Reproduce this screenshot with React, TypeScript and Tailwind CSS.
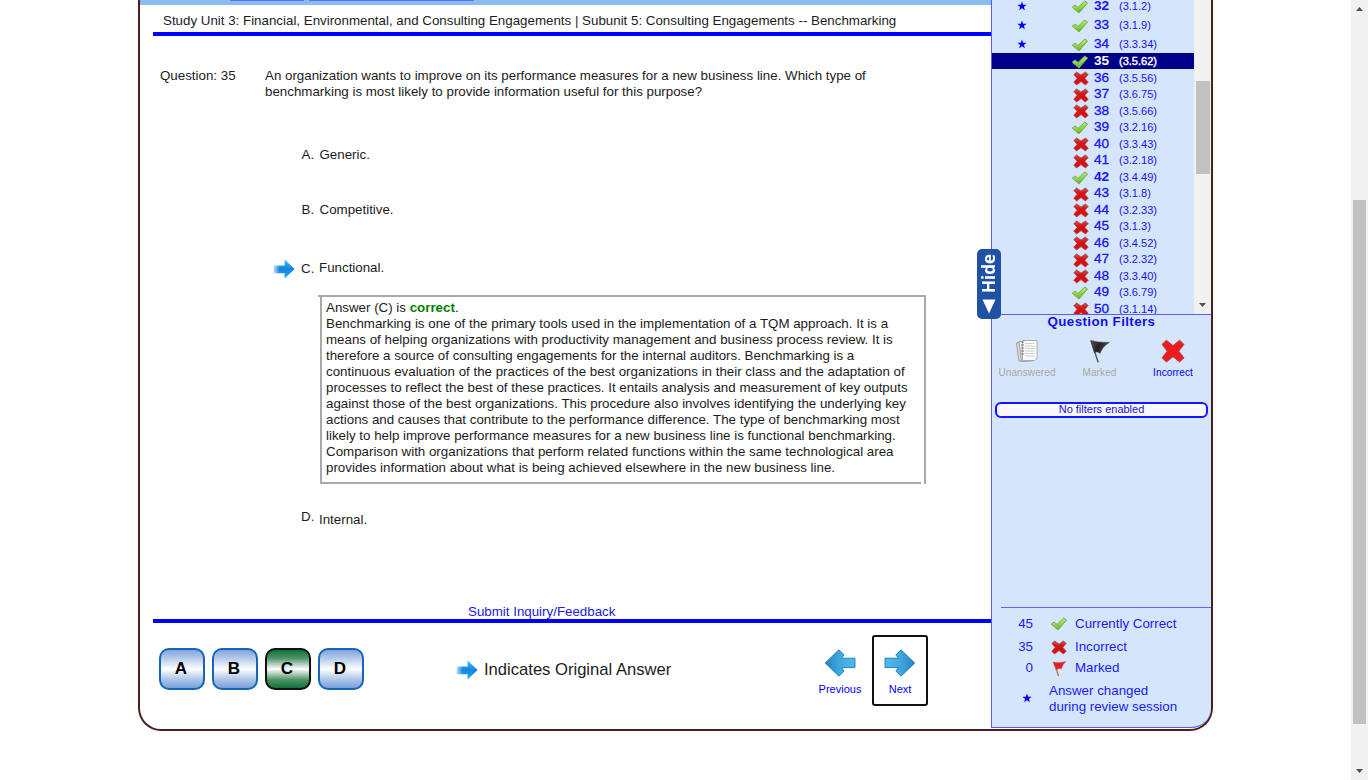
import React from "react";

type Status = "ok" | "bad";

const items: { n: number; ref: string; s: Status; star?: boolean; bold?: boolean }[] = [
  { n: 32, ref: "3.1.2", s: "ok", star: true, bold: true },
  { n: 33, ref: "3.1.9", s: "ok", star: true },
  { n: 34, ref: "3.3.34", s: "ok", star: true },
  { n: 35, ref: "3.5.62", s: "ok" },
  { n: 36, ref: "3.5.56", s: "bad" },
  { n: 37, ref: "3.6.75", s: "bad" },
  { n: 38, ref: "3.5.66", s: "bad" },
  { n: 39, ref: "3.2.16", s: "ok" },
  { n: 40, ref: "3.3.43", s: "bad" },
  { n: 41, ref: "3.2.18", s: "bad" },
  { n: 42, ref: "3.4.49", s: "ok", bold: true },
  { n: 43, ref: "3.1.8", s: "bad" },
  { n: 44, ref: "3.2.33", s: "bad" },
  { n: 45, ref: "3.1.3", s: "bad" },
  { n: 46, ref: "3.4.52", s: "bad" },
  { n: 47, ref: "3.2.32", s: "bad" },
  { n: 48, ref: "3.3.40", s: "bad" },
  { n: 49, ref: "3.6.79", s: "ok" },
  { n: 50, ref: "3.1.14", s: "bad" },
];

const explanation = [
  "Benchmarking is one of the primary tools used in the implementation of a TQM approach. It is a",
  "means of helping organizations with productivity management and business process review. It is",
  "therefore a source of consulting engagements for the internal auditors. Benchmarking is a",
  "continuous evaluation of the practices of the best organizations in their class and the adaptation of",
  "processes to reflect the best of these practices. It entails analysis and measurement of key outputs",
  "against those of the best organizations. This procedure also involves identifying the underlying key",
  "actions and causes that contribute to the performance difference. The type of benchmarking most",
  "likely to help improve performance measures for a new business line is functional benchmarking.",
  "Comparison with organizations that perform related functions within the same technological area",
  "provides information about what is being achieved elsewhere in the new business line.",
];

function Defs() {
  return (
    <svg width="0" height="0" className="absolute">
      <defs>
        <linearGradient id="gCheck" x1="0" y1="0" x2="0.3" y2="1">
          <stop offset="0" stopColor="#c9f08a" />
          <stop offset="0.5" stopColor="#9ade4a" />
          <stop offset="1" stopColor="#62b81e" />
        </linearGradient>
        <linearGradient id="gCross" x1="0" y1="0" x2="0" y2="1">
          <stop offset="0" stopColor="#c8504e" />
          <stop offset="0.4" stopColor="#d81414" />
          <stop offset="1" stopColor="#dc0a0a" />
        </linearGradient>
        <linearGradient id="gSmallArrow" x1="0" y1="0" x2="0" y2="1">
          <stop offset="0" stopColor="#35c4ff" />
          <stop offset="0.5" stopColor="#1583dd" />
          <stop offset="1" stopColor="#28aef8" />
        </linearGradient>
        <linearGradient id="gFade" x1="0" y1="0" x2="1" y2="0">
          <stop offset="0" stopColor="#fff" stopOpacity="0.2" />
          <stop offset="0.3" stopColor="#fff" />
        </linearGradient>
        <mask id="mFade" maskUnits="userSpaceOnUse" x="0" y="0" width="22" height="20">
          <rect width="22" height="20" fill="url(#gFade)" />
        </mask>
        <linearGradient id="gNav" x1="0" y1="0" x2="1" y2="0">
          <stop offset="0" stopColor="#4fbbeb" />
          <stop offset="0.5" stopColor="#41a9de" />
          <stop offset="1" stopColor="#2384c6" />
        </linearGradient>
        <linearGradient id="gDark" x1="0" y1="0" x2="1" y2="0.3">
          <stop offset="0" stopColor="#555" />
          <stop offset="0.5" stopColor="#222" />
          <stop offset="1" stopColor="#4a4a4a" />
        </linearGradient>
      </defs>
    </svg>
  );
}

const Check = () => (
  <svg width="18" height="14" viewBox="0 0 18 14" className="block shrink-0">
    <path d="M1.2 7.2 4 5 7 7.4 13.8 1 16.6 3 8 13Z" fill="url(#gCheck)" stroke="#7fa866" strokeWidth="1" strokeLinejoin="round" />
  </svg>
);

const Cross = () => (
  <svg width="16" height="15" viewBox="0 0 16 15" className="block shrink-0">
    <path d="M3.6 .9 8 4.1 12.4 .9 15.2 3.6 11.8 7.3 15.2 11.2 12.4 14 8 10.6 3.6 14 .8 11.2 4.2 7.3 .8 3.6Z" fill="url(#gCross)" stroke="#a04a4e" strokeWidth="0.8" strokeLinejoin="round" />
  </svg>
);

const Star = () => (
  <svg width="10" height="10" viewBox="0 0 10 10" className="block shrink-0">
    <path d="M5 .4 6.15 3.7 9.6 3.75 6.9 5.9 7.9 9.3 5 7.3 2.1 9.3 3.1 5.9.4 3.75 3.85 3.7Z" fill="#0000ff" />
  </svg>
);

const SmallArrow = () => (
  <svg width="22" height="20" viewBox="0 0 22 20" className="block shrink-0">
    <path d="M.6 6.5H11.6V.5L21.7 10 11.6 19.5V14.2H.6Z" fill="url(#gSmallArrow)" mask="url(#mFade)" />
  </svg>
);

const NavArrow = ({ flip = false }: { flip?: boolean }) => (
  <svg width="32" height="28" viewBox="0 0 32 28" className={flip ? "block -scale-x-100" : "block"}>
    <path d="M1 9.2H14.6L11.8 6 17 .8 30.8 14 17 27.2 11.8 22 14.6 18.6H1Z" fill="url(#gNav)" stroke="#1c78b4" strokeWidth="0.9" strokeLinejoin="round" />
  </svg>
);

function ScrollTri({ up = false }: { up?: boolean }) {
  return (
    <svg width="7" height="4" viewBox="0 0 7 4" className="block">
      <path d={up ? "M3.5 0 7 4H0Z" : "M0 0H7L3.5 4Z"} fill="#505050" />
    </svg>
  );
}

function Answer({ letter, correct = false }: { letter: string; correct?: boolean }) {
  return (
    <button
      className={
        correct
          ? "flex h-[42px] w-[46px] items-center justify-center rounded-[10px] border-2 border-[#111] bg-[linear-gradient(#0f7038,#4f9468_22%,#fff_50%,#4f9468_78%,#0f7038)] text-[17px] font-bold text-black"
          : "flex h-[42px] w-[46px] items-center justify-center rounded-[10px] border-2 border-[#1565b8] bg-[linear-gradient(#81a6dd,#b4c9ea_22%,#fff_50%,#b4c9ea_75%,#78a0da)] text-[17px] font-bold text-black"
      }
    >
      <span className="-translate-x-px">{letter}</span>
    </button>
  );
}

function Choice({ letter, text, className, letterClass }: { letter: string; text: string; className: string; letterClass: string }) {
  return (
    <div className={`flex h-4 leading-4 ${className}`}>
      <span className={`w-[18px] ${letterClass}`}>{letter}.</span>
      <span className="whitespace-nowrap">{text}</span>
    </div>
  );
}

function Row({ it }: { it: (typeof items)[number] }) {
  const sel = it.n === 35;
  return (
    <div
      className={
        sel
          ? "mb-[0.5px] flex h-4 w-[202px] shrink-0 items-center bg-[#00008b] text-white"
          : it.star
            ? "flex h-[19px] w-[202px] shrink-0 items-center text-[#1414ff]"
            : "flex h-[16.5px] w-[202px] shrink-0 items-center text-[#1414ff]"
      }
    >
      <span className="ml-[25px] w-[54px] shrink-0">{it.star && <Star />}</span>
      <span className="flex w-[23px] shrink-0 justify-start">
        {it.s === "ok" ? <span className="translate-y-px"><Check /></span> : <span className="ml-[1.5px] translate-y-px"><Cross /></span>}
      </span>
      <span
        className={
          sel || it.bold
            ? "w-[25px] text-[13.6px] font-bold leading-4"
            : "w-[25px] text-[13.6px] leading-4 [-webkit-text-stroke:0.3px_#1414ff]"
        }
      >
        {it.n}
      </span>
      <span className={sel ? "text-[11px] leading-4 [-webkit-text-stroke:0.4px_#fff]" : "text-[11px] leading-4"}>({it.ref})</span>
    </div>
  );
}

export default function App() {
  return (
    <div className="flex h-[780px] w-[1368px] justify-between overflow-hidden bg-white font-['Liberation_Sans',Arial,sans-serif] text-[13.33px] text-[#1c1c1c]">
      <Defs />
      <div className="ml-[138px] flex h-[731px] w-[1075px] rounded-b-[23px] border-2 border-t-0 border-[#4c1f1f]">
        <main className="flex w-[851px] shrink-0 flex-col">
          <div className="flex h-[5px] bg-[#8bbcf1] pl-[90px]">
            <div className="h-px w-[74px] bg-[#5f6cf5]" />
            <div className="ml-[5px] h-px w-[165px] bg-[#5f6cf5]" />
          </div>
          <div className="h-[27px] whitespace-nowrap pl-[23px] pt-[8px] leading-4">
            Study Unit 3: Financial, Environmental, and Consulting Engagements | Subunit 5: Consulting Engagements -- Benchmarking
          </div>
          <div className="ml-[13px] h-[4px] bg-[#0000ff]" />
          <div className="mt-[32px] flex h-8 pl-[20px] leading-4">
            <span className="w-[105px] shrink-0">Question: 35</span>
            <p className="whitespace-nowrap">
              An organization wants to improve on its performance measures for a new business line. Which type of
              <br />
              benchmarking is most likely to provide information useful for this purpose?
            </p>
          </div>
          <Choice letter="A" text="Generic." className="mt-[47px] pl-[161.5px]" letterClass="" />
          <Choice letter="B" text="Competitive." className="mt-[39px] pl-[161.5px]" letterClass="" />
          <div className="mt-[42px] flex h-4 pl-[133px] leading-4">
            <div className="w-[28px] -translate-y-px"><SmallArrow /></div>
            <span className="w-[18px] translate-y-px">C.</span>
            <span>Functional.</span>
          </div>
          <div className="relative ml-[180px] mt-[19px] h-[189px] w-[606px] border-2 border-[#a9a9a9] bg-white pl-[4px] pt-[3px] leading-4 before:absolute before:-left-[4px] before:-top-[2px] before:h-[2px] before:w-[3px] before:bg-[#a9a9a9] after:absolute after:-bottom-[2px] after:right-0 after:h-[2px] after:w-[3px] after:bg-white">
            <p className="whitespace-nowrap">
              Answer (C) is <b className="text-[#008000]">correct</b>.
            </p>
            {explanation.map((l) => (
              <p key={l} className="whitespace-nowrap">{l}</p>
            ))}
          </div>
          <Choice letter="D" text="Internal." className="mt-[28px] pl-[161px]" letterClass="-translate-y-[3px]" />
          <div className="mt-[75px] h-4 pl-[328px] pt-px leading-4">
            <a className="text-[#1a1ae0]">Submit Inquiry/Feedback</a>
          </div>
          <div className="ml-[13px] h-[4px] bg-[#0000ff]" />
          <div className="flex h-[100px] pl-[19px]">
            <div className="mt-[25px] flex gap-[7px]">
              <Answer letter="A" />
              <Answer letter="B" />
              <Answer letter="C" correct />
              <Answer letter="D" />
            </div>
            <div className="ml-[92px] mt-[37px] flex h-5 w-[356px] shrink-0 items-center text-[16.6px]">
              <SmallArrow />
              <span className="ml-[6px] whitespace-nowrap leading-5">Indicates Original Answer</span>
            </div>
            <div className="mt-[12px] flex text-[11px] text-[#0000ff]">
              <div className="flex h-[71px] w-[56px] flex-col items-center pt-[14px]">
                <NavArrow flip />
                <span className="mt-[4px] leading-4">Previous</span>
              </div>
              <div className="ml-[4px] flex h-[71px] w-[56px] flex-col items-center rounded-[3px] border-2 border-[#111] pt-[12px]">
                <NavArrow />
                <span className="mt-[4px] leading-4">Next</span>
              </div>
            </div>
          </div>
        </main>

        <aside className="relative flex h-[728px] w-[220px] shrink-0 flex-col overflow-visible rounded-br-[20px] border-b border-l border-[#5a5aff] bg-[#d5e5fb]">
          <div className="flex h-[314px] shrink-0 overflow-hidden">
            <div className="flex h-[314px] w-[202px] shrink-0 flex-col">
              <div className="-mt-[4px] flex flex-col">
                {items.map((it) => (
                  <Row key={it.n} it={it} />
                ))}
              </div>
            </div>
            <div className="flex w-[17px] flex-col items-center bg-[#f1f1f1]">
              <div className="mt-[81px] h-[93px] w-[14px] shrink-0 bg-[#c1c1c1]" />
              <div className="mt-[129px]"><ScrollTri /></div>
            </div>
          </div>
          <div className="h-[112px] shrink-0 border-t border-[#5a5aff]">
            <h2 className="-mt-px text-center text-[13.33px] font-bold leading-4 tracking-[0.4px] text-[#1010f0]">Question Filters</h2>
            <div className="mt-[8px] flex text-[10px]">
              <div className="flex w-[70px] flex-col items-center text-[#a8aaa2]">
                <svg width="26" height="26" viewBox="0 0 26 26">
                  <path d="M2.5 5 10 3.5 12 22 5 23.2Z" fill="#ddd" stroke="#999" strokeWidth="0.9" />
                  <path d="M5 3.5 18 2.5 19 23 7.5 23.5Z" fill="#eee" stroke="#999" strokeWidth="0.9" />
                  <path d="M8.5 2.5H23V20.5L20.5 22.5H8.5Z" fill="#fafafa" stroke="#a5a5a5" strokeWidth="0.9" />
                  <path d="M11 5.5h9.5M11 8h9.5M11 10.5h9.5M11 13h9.5M11 15.5h9.5M11 18h9.5" stroke="#ccc" strokeWidth="0.9" />
                  <path d="M7 4h3M7 7h3M7 10h3M7 13h3M7 16h3" stroke="#777" strokeWidth="0.9" />
                </svg>
                <span className="mt-px leading-4 tracking-[0.1px]">Unanswered</span>
              </div>
              <div className="flex w-[75px] flex-col items-center text-[#a8aaa2]">
                <svg width="26" height="26" viewBox="0 0 26 26">
                  <path d="M4 3 11.2 24.2" stroke="#555" strokeWidth="1.4" />
                  <path d="M3.8 2.2C8 3.8 14 4.5 22.4 4.4 17 7.5 14.8 11 13 15.5 10.5 13 8.5 14 7.5 15Z" fill="url(#gDark)" stroke="#444" strokeWidth="0.6" />
                </svg>
                <span className="mt-px leading-4 tracking-[0.1px]">Marked</span>
              </div>
              <div className="flex w-[72px] flex-col items-center text-[#0000ff]">
                <svg width="26" height="26" viewBox="0 0 26 26">
                  <path d="M6.4 2.2 13 7.6 19.6 2.2 24 6.4 18.8 13.2 24 19.8 19.6 24 13 18.8 6.4 24 2 19.8 7.2 13.2 2 6.4Z" fill="#ec1c1c" stroke="#b04448" strokeWidth="0.9" strokeLinejoin="round" />
                </svg>
                <span className="mt-px leading-4 tracking-[0.1px]">Incorrect</span>
              </div>
            </div>
            <div className="ml-[3px] mt-[21px] flex h-[16px] w-[213px] items-center justify-center rounded-[6px] border-2 border-[#1414ff] bg-[#f8f7ff] text-[11px] text-[#1414d8]">
              <span className="-translate-y-px">No filters enabled</span>
            </div>
          </div>
          <div className="ml-[9px] mt-[181px] h-px w-[210px] shrink-0 bg-[#6464ff]" />
          <div className="flex flex-col text-[#1a1aff]">
            <div className="mt-[8px] flex h-4 items-center leading-4">
              <span className="w-[41px] text-right">45</span>
              <span className="ml-[17px] w-[25px]"><Check /></span>
              <span>Currently Correct</span>
            </div>
            <div className="mt-[7px] flex h-4 items-center leading-4">
              <span className="w-[41px] text-right">35</span>
              <span className="ml-[18px] w-[24px]"><Cross /></span>
              <span>Incorrect</span>
            </div>
            <div className="mt-[5px] flex h-4 items-center leading-4">
              <span className="w-[41px] text-right">0</span>
              <span className="ml-[19px] w-[23px]">
                <svg width="15" height="17" viewBox="0 0 15 17" className="block">
                  <path d="M2 2 6.5 16" stroke="#b08a50" strokeWidth="1.5" />
                  <path d="M1 2C5 3 9 2.5 14 1.5 11.5 4 10 6 9.5 9 7.5 8 5.5 9 4.3 10Z" fill="#e81c1c" stroke="#c06060" strokeWidth="0.5" />
                </svg>
              </span>
              <span>Marked</span>
            </div>
            <div className="mt-[7px] flex h-8 items-center leading-4">
              <span className="ml-[30px] w-[27px] -translate-y-px"><Star /></span>
              <span className="whitespace-nowrap">Answer changed<br />during review session</span>
            </div>
          </div>
          <button className="absolute -left-[15px] top-[249px] flex h-[70px] w-6 flex-col items-center rounded-[5px] bg-[#1f52a4] text-white">
            <span className="mt-[4px] h-[42px] rotate-180 font-['Open_Sans',sans-serif] text-[17px] font-bold leading-6 [writing-mode:vertical-rl]">Hide</span>
            <svg width="14" height="15" viewBox="0 0 14 15" className="mt-[4px]"><path d="M.5.5H13.5L7 14.5Z" fill="#fff" /></svg>
          </button>
        </aside>
      </div>

      <div className="flex h-[780px] w-[17px] flex-col items-center bg-[#f1f1f1]">
        <div className="mt-[7px]"><ScrollTri up /></div>
        <div className="mt-[189px] h-[524px] w-[13px] shrink-0 bg-[#c1c1c1]" />
        <div className="mt-[45px]"><ScrollTri /></div>
      </div>
    </div>
  );
}
